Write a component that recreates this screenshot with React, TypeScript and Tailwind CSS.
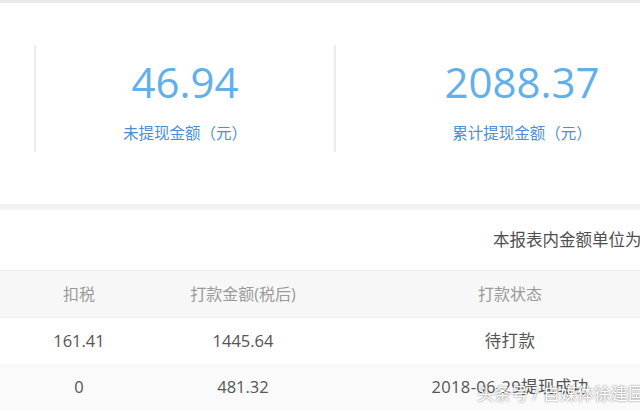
const font = "font-['Open_Sans','Noto_Sans_CJK_SC',sans-serif]";

const rows = [
  { tax: "161.41", paid: "1445.64", status: "待打款", bg: "bg-white" },
  { tax: "0", paid: "481.32", status: "2018-06-29提现成功", bg: "bg-[#fafafa]" },
];

function Stat({ value, label, width }: { value: string; label: string; width: string }) {
  return (
    <div className={`${width} h-[107px] border-l-2 border-[#ececec] flex flex-col items-center pt-[16px]`}>
      <div className="text-[42px] leading-none font-normal text-[#62b0ea] font-['Open_Sans',sans-serif]">{value}</div>
      <div className="mt-[23px] text-[15.5px] leading-none text-[#4a8fd6]">{label}</div>
    </div>
  );
}

export default function App() {
  return (
    <div className={`relative w-[640px] h-[411px] overflow-hidden bg-white ${font}`}>
      <div className="h-[3px] bg-[#e9e9e9]" />

      {/* summary */}
      <div className="h-[201px] flex pt-[42px]">
        <div className="w-[34px] shrink-0" />
        <Stat value="46.94" label="未提现金额（元）" width="w-[300px] shrink-0" />
        <Stat value="2088.37" label="累计提现金额（元）" width="w-[374px] shrink-0" />
      </div>

      <div className="h-[6px] bg-[#f2f2f2]" />

      <div className="h-[60px] flex items-center pl-[493px] whitespace-nowrap text-[16.5px] text-[#4f4f4f]">
        本报表内金额单位为元
      </div>

      {/* table */}
      <div className="border-t border-[#ececec]">
        <div className="grid grid-cols-[158px_170px_364px] h-[47px] items-center bg-[#f7f7f7] text-[16px] text-[#9a9a9a] border-b border-[#eeeeee]">
          <div className="text-center">扣税</div>
          <div className="text-center">打款金额(税后)</div>
          <div className="text-center">打款状态</div>
        </div>
        {rows.map((r) => (
          <div
            key={r.tax}
            className={`grid grid-cols-[158px_170px_364px] h-[46px] items-center text-[16.5px] text-[#555] whitespace-nowrap ${r.bg}`}
          >
            <div className="text-center">{r.tax}</div>
            <div className="text-center">{r.paid}</div>
            <div className="text-center tracking-[0.35px]">{r.status}</div>
          </div>
        ))}
      </div>

      {/* watermark */}
      <div className="absolute left-[477px] top-[385px] text-[17px] leading-none text-white whitespace-nowrap [text-shadow:0_0_2px_rgba(0,0,0,0.6)]">
        头条号 / 自媒体徐建国
      </div>
    </div>
  );
}
